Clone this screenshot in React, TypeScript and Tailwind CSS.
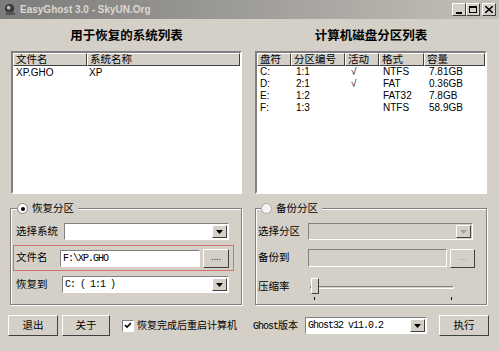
import React from "react";

const FONT = { fontFamily: '"Liberation Sans", "Noto Sans CJK SC", sans-serif' };
const MONO = { fontFamily: '"Liberation Mono", "Noto Sans CJK SC", monospace' };
const CJK = { fontFamily: '"Noto Sans CJK SC", sans-serif' };

const sunken = "border border-t-[#808080] border-l-[#808080] border-b-white border-r-white";
const raised = "border border-t-white border-l-white border-b-[#404040] border-r-[#404040] bg-[#d4d0c8]";

function Arrow({ disabled }: { disabled?: boolean }) {
  return (
    <div className={`w-[15px] h-[13px] ${raised} flex items-center justify-center`}>
      <svg width="7" height="4" viewBox="0 0 7 4">
        <path d="M0 0h7L3.5 4z" fill={disabled ? "#a0a0a0" : "#000"} />
      </svg>
    </div>
  );
}

function Select({ value, disabled, w }: { value?: string; disabled?: boolean; w: string }) {
  return (
    <div className={`${w} h-[17px] ${sunken} ${disabled ? "bg-[#d4d0c8]" : "bg-white"} flex items-center justify-between pl-[2px] pr-px`}>
      <span className="text-[10px] leading-none tracking-[-1px] whitespace-pre" style={MONO}>{value}</span>
      <Arrow disabled={disabled} />
    </div>
  );
}

function Header({ cols }: { cols: { label: string; w: string }[] }) {
  return (
    <div className="flex h-[13px]">
      {cols.map((c) => (
        <div key={c.label} className={`${c.w} ${raised} text-[10.5px] leading-[11px] pl-[2px] overflow-hidden whitespace-nowrap`}>
          {c.label}
        </div>
      ))}
    </div>
  );
}

const parts = [
  ["C:", "1:1", "√", "NTFS", "7.81GB"],
  ["D:", "2:1", "√", "FAT", "0.36GB"],
  ["E:", "1:2", "", "FAT32", "7.8GB"],
  ["F:", "1:3", "", "NTFS", "58.9GB"],
];

export default function App() {
  return (
    <div className="w-[499px] h-[351px] bg-[#d4d0c8] overflow-hidden text-black" style={FONT}>
      {/* title bar */}
      <div className="h-[19px] flex items-center justify-between pl-[4px] pr-[3px] bg-gradient-to-r from-[#7c7c7c] to-[#c4c0b8]">
        <div className="flex items-center gap-[3px]">
          <svg width="13" height="13" viewBox="0 0 14 14">
            <circle cx="6" cy="6" r="5" fill="#3a3a3a" />
            <path d="M2 11c2-3 6-3 10 0v2H2z" fill="#555" />
            <circle cx="5" cy="5" r="2" fill="#bbb" />
          </svg>
          <span className="text-[10px] font-bold text-[#dcd8d0]">EasyGhost 3.0 - SkyUN.Org</span>
        </div>
        <div className="flex">
          {["min", "max", "close"].map((k) => (
            <div key={k} className={`w-[14px] h-[13px] ${raised} flex items-center justify-center ${k === "close" ? "ml-[2px]" : ""}`}>
              {k === "min" && <div className="w-[6px] h-[2px] bg-black mt-[6px]" />}
              {k === "max" && <div className="w-[8px] h-[7px] border border-black border-t-2" />}
              {k === "close" && (
                <svg width="8" height="7" viewBox="0 0 8 7">
                  <path d="M0 0l8 7M8 0L0 7" stroke="#000" strokeWidth="1.5" />
                </svg>
              )}
            </div>
          ))}
        </div>
      </div>

      {/* lists */}
      <div className="flex gap-[13px] pl-[11px] pt-[4px]">
        <div className="w-[231px] flex flex-col">
          <div className="text-[12.5px] font-bold text-center h-[28px] leading-[24px]" style={CJK}>
            用于恢复的系统列表
          </div>
          <div className="h-[143px] bg-white border-2 border-t-[#808080] border-l-[#808080] border-b-white border-r-white">
            <Header cols={[{ label: "文件名", w: "w-[74px]" }, { label: "系统名称", w: "flex-1" }]} />
            <div className="flex text-[10px] h-[13px] leading-[13px]">
              <span className="w-[74px] pl-[3px]">XP.GHO</span>
              <span className="pl-[2px]">XP</span>
            </div>
          </div>
        </div>
        <div className="w-[232px] flex flex-col">
          <div className="text-[12.5px] font-bold text-center h-[28px] leading-[24px]" style={CJK}>
            计算机磁盘分区列表
          </div>
          <div className="h-[143px] bg-white border-2 border-t-[#808080] border-l-[#808080] border-b-white border-r-white">
            <Header
              cols={[
                { label: "盘符", w: "w-[34px]" },
                { label: "分区编号", w: "w-[54px]" },
                { label: "活动", w: "w-[34px]" },
                { label: "格式", w: "w-[45px]" },
                { label: "容量", w: "flex-1" },
              ]}
            />
            {parts.map((p) => (
              <div key={p[0]} className="flex text-[10px] h-[12px] leading-[12px]">
                <span className="w-[34px] pl-[3px]">{p[0]}</span>
                <span className="w-[54px] pl-[5px]">{p[1]}</span>
                <span className="w-[34px] pl-[6px]">{p[2]}</span>
                <span className="w-[45px] pl-[4px]">{p[3]}</span>
                <span className="pl-[5px]">{p[4]}</span>
              </div>
            ))}
          </div>
        </div>
      </div>

      {/* group boxes */}
      <div className="flex gap-[13px] pl-[10px] pt-[14px] text-[10.5px]">
        <div className="relative w-[232px] h-[97px] border border-[#808080] shadow-[inset_1px_1px_0_white,1px_1px_0_white] px-[2px] pt-[14px]">
          <div className="absolute -top-[8px] left-[6px] flex items-center gap-[4px] bg-[#d4d0c8] pr-[4px] h-[15px]">
            <div className="w-[11px] h-[11px] rounded-full bg-white border border-[#808080] flex items-center justify-center">
              <div className="w-[4px] h-[4px] rounded-full bg-black" />
            </div>
            <span>恢复分区</span>
          </div>
          <div className="flex items-center h-[17px] pl-[3px]">
            <span className="w-[48px]">选择系统</span>
            <Select w="w-[165px]" />
          </div>
          <div className="flex items-center h-[26px] mt-[5px] w-[221px] border border-[#d87070]">
            <span className="w-[46px] pl-[2px]">文件名</span>
            <div className={`w-[140px] h-[17px] ${sunken} bg-white pl-[2px] text-[10px] leading-[15px] tracking-[-1px]`} style={MONO}>
              F:\XP.GHO
            </div>
            <div className={`w-[26px] h-[19px] ml-[3px] ${raised} text-[9px] leading-[14px] text-center`}>....</div>
          </div>
          <div className="flex items-center h-[17px] mt-[5px] pl-[3px]">
            <span className="w-[46px]">恢复到</span>
            <Select w="w-[167px]" value="C: ( 1:1 )" />
          </div>
        </div>

        <div className="relative w-[232px] h-[97px] border border-[#808080] shadow-[inset_1px_1px_0_white,1px_1px_0_white] px-[2px] pt-[14px]">
          <div className="absolute -top-[8px] left-[5px] flex items-center gap-[4px] bg-[#d4d0c8] pr-[4px] h-[15px]">
            <div className="w-[11px] h-[11px] rounded-full bg-[#f4f4f4] border border-[#a8a8a8]" />
            <span>备份分区</span>
          </div>
          <div className="flex items-center h-[17px]">
            <span className="w-[50px]">选择分区</span>
            <Select w="w-[165px]" disabled />
          </div>
          <div className="flex items-center h-[18px] mt-[9px]">
            <span className="w-[50px]">备份到</span>
            <div className={`w-[139px] h-[18px] ${sunken} bg-[#d4d0c8]`} />
            <div className={`w-[25px] h-[19px] ml-[3px] ${raised} text-[9px] leading-[14px] text-center text-[#a0a0a0]`}>....</div>
          </div>
          <div className="flex items-center h-[20px] mt-[10px]">
            <span className="w-[52px]">压缩率</span>
            <div className="relative w-[144px] h-[20px] flex items-center">
              <div className="w-full h-[3px] border border-t-[#808080] border-l-[#808080] border-b-white border-r-white bg-[#d4d0c8]" />
              <div className="absolute left-[1px] top-[1px] w-[8px] h-[16px] border border-t-white border-l-white border-b-[#404040] border-r-[#404040] bg-[#d4d0c8]" />
              <div className="absolute left-[4px] bottom-[-3px] w-px h-[3px] bg-black" />
              <div className="absolute right-[2px] bottom-[-3px] w-px h-[3px] bg-black" />
            </div>
          </div>
        </div>
      </div>

      {/* bottom bar */}
      <div className="flex items-center pl-[8px] pt-[10px] text-[10.5px]">
        <div className={`w-[50px] h-[21px] ${raised} text-center leading-[19px]`}>退出</div>
        <div className={`w-[48px] h-[21px] ${raised} text-center leading-[19px] ml-[4px]`}>关于</div>
        <div className="flex items-center ml-[12px] w-[131px] gap-[3px]">
          <div className="w-[12px] h-[12px] bg-white border border-t-[#808080] border-l-[#808080] border-b-white border-r-white flex items-center justify-center">
            <svg width="8" height="7" viewBox="0 0 8 7">
              <path d="M1 3l2 2 4-4" stroke="#000" strokeWidth="1.6" fill="none" />
            </svg>
          </div>
          <span className="text-[10px] whitespace-nowrap">恢复完成后重启计算机</span>
        </div>
        <span className="w-[52px] whitespace-nowrap text-[10px] tracking-[-1px]" style={MONO}>
          Ghost<span style={CJK} className="tracking-normal">版本</span>
        </span>
        <Select w="w-[122px]" value="Ghost32 v11.0.2" />
        <div className={`w-[50px] h-[21px] ${raised} text-center leading-[19px] ml-[12px]`}>执行</div>
      </div>
    </div>
  );
}
